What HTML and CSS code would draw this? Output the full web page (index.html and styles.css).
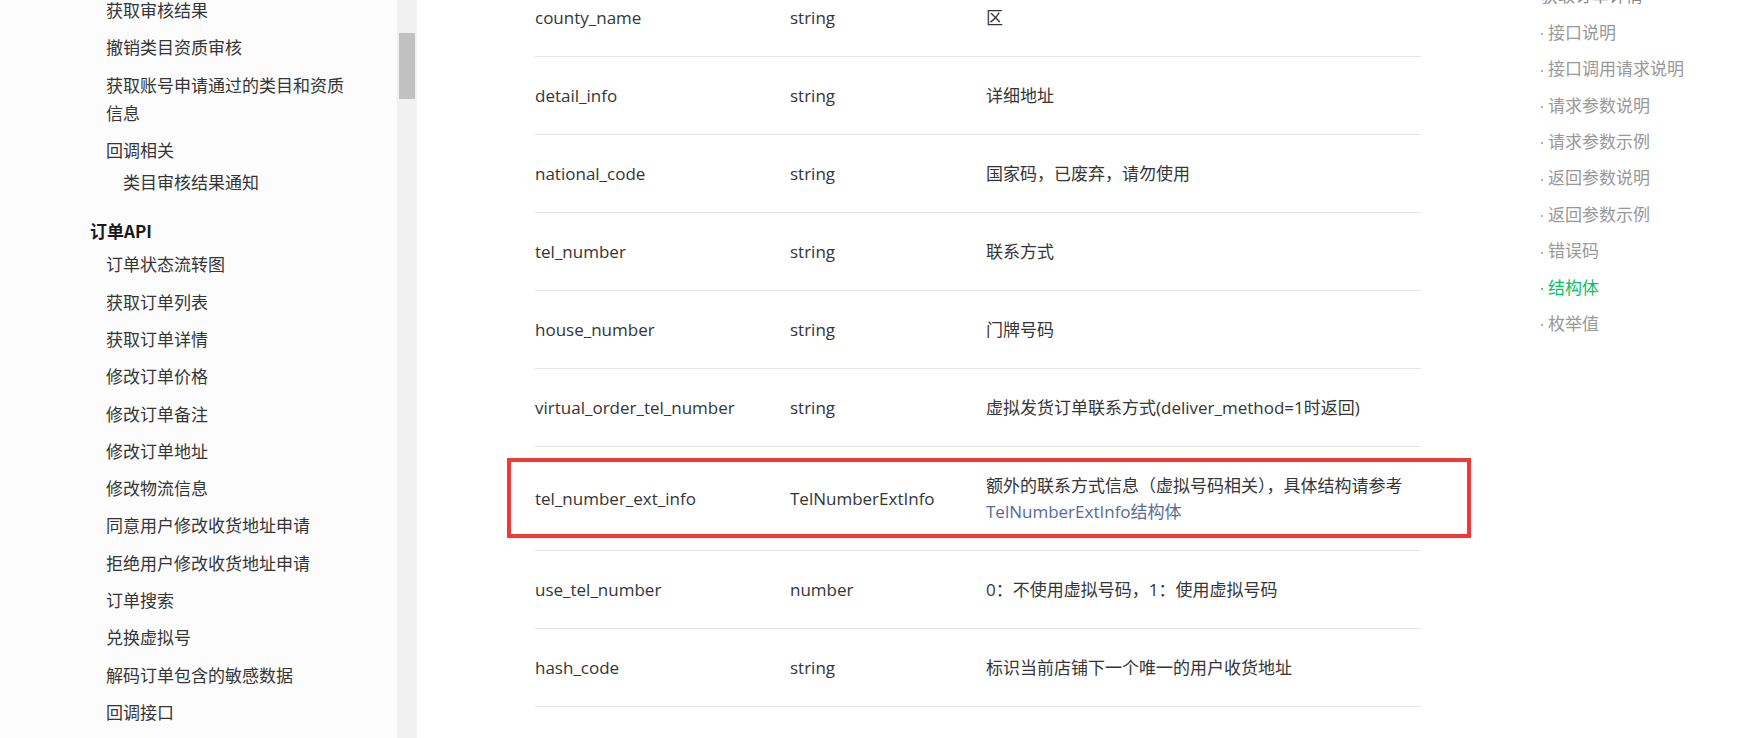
FILE: index.html
```html
<!DOCTYPE html>
<html lang="zh-CN">
<head>
<meta charset="utf-8">
<title>获取订单详情</title>
<link rel="stylesheet" href="styles.css">
</head>
<body>
<nav class="sidebar">
  <ul class="nav nav-first">
    <li class="nav-item">获取审核结果</li>
    <li class="nav-item">撤销类目资质审核</li>
    <li class="nav-item">获取账号申请通过的类目和资质信息</li>
    <li class="nav-item">回调相关</li>
    <li class="nav-sub">类目审核结果通知</li>
  </ul>
  <div class="nav-heading">订单API</div>
  <ul class="nav">
    <li class="nav-item">订单状态流转图</li>
    <li class="nav-item">获取订单列表</li>
    <li class="nav-item">获取订单详情</li>
    <li class="nav-item">修改订单价格</li>
    <li class="nav-item">修改订单备注</li>
    <li class="nav-item">修改订单地址</li>
    <li class="nav-item">修改物流信息</li>
    <li class="nav-item">同意用户修改收货地址申请</li>
    <li class="nav-item">拒绝用户修改收货地址申请</li>
    <li class="nav-item">订单搜索</li>
    <li class="nav-item">兑换虚拟号</li>
    <li class="nav-item">解码订单包含的敏感数据</li>
    <li class="nav-item">回调接口</li>
    <li class="nav-item">订单状态推送</li>
  </ul>
</nav>
<div class="scrollbar"><div class="thumb"></div></div>
<main class="main">
  <div class="table">
    <div class="row"><div class="cell">county_name</div><div class="cell">string</div><div class="cell">区</div></div>
    <div class="row"><div class="cell">detail_info</div><div class="cell">string</div><div class="cell">详细地址</div></div>
    <div class="row"><div class="cell">national_code</div><div class="cell">string</div><div class="cell">国家码，已废弃，请勿使用</div></div>
    <div class="row"><div class="cell">tel_number</div><div class="cell">string</div><div class="cell">联系方式</div></div>
    <div class="row"><div class="cell">house_number</div><div class="cell">string</div><div class="cell">门牌号码</div></div>
    <div class="row"><div class="cell">virtual_order_tel_number</div><div class="cell">string</div><div class="cell">虚拟发货订单联系方式(deliver_method=1时返回)</div></div>
    <div class="row row-marked"><div class="cell">tel_number_ext_info</div><div class="cell">TelNumberExtInfo</div><div class="cell">额外的联系方式信息（虚拟号码相关），具体结构请参考<a class="link" href="#">TelNumberExtInfo结构体</a></div></div>
    <div class="row"><div class="cell">use_tel_number</div><div class="cell">number</div><div class="cell">0：不使用虚拟号码，1：使用虚拟号码</div></div>
    <div class="row"><div class="cell">hash_code</div><div class="cell">string</div><div class="cell">标识当前店铺下一个唯一的用户收货地址</div></div>
  </div>
</main>
<aside class="toc">
  <div class="toc-title">获取订单详情</div>
  <ul class="toc-list">
    <li class="toc-item"><span class="dot"></span>接口说明</li>
    <li class="toc-item"><span class="dot"></span>接口调用请求说明</li>
    <li class="toc-item"><span class="dot"></span>请求参数说明</li>
    <li class="toc-item"><span class="dot"></span>请求参数示例</li>
    <li class="toc-item"><span class="dot"></span>返回参数说明</li>
    <li class="toc-item"><span class="dot"></span>返回参数示例</li>
    <li class="toc-item"><span class="dot"></span>错误码</li>
    <li class="toc-item active"><span class="dot"></span>结构体</li>
    <li class="toc-item"><span class="dot"></span>枚举值</li>
  </ul>
</aside>
</body>
</html>
```
FILE: styles.css
```css
* {
  box-sizing: border-box;
  margin: 0;
  padding: 0;
}

html, body {
  height: 100%;
}

body {
  display: flex;
  height: 738px;
  overflow: hidden;
  background: #ffffff;
  font-family: "Open Sans", "Noto Sans CJK SC", sans-serif;
  color: #353535;
}

ul {
  list-style: none;
}

/* ---------- left navigation ---------- */
.sidebar {
  flex: none;
  width: 397px;
  background: #fcfcfc;
  padding: 0 46px 0 90px;
  overflow: hidden;
  font-family: "Noto Sans CJK SC", sans-serif;
  font-size: 17px;
  color: #353535;
}

.nav-first {
  margin-top: -8.65px;
}

.nav-item {
  padding: 4.65px 0 4.65px 16px;
  line-height: 28px;
}

.nav-sub {
  padding: 0 0 4.65px 33px;
  line-height: 28px;
}

.nav-heading {
  margin-top: 11px;
  padding: 4.65px 0 1px 0;
  line-height: 28px;
  font-weight: 700;
  color: #191919;
}

/* ---------- fake scrollbar ---------- */
.scrollbar {
  flex: none;
  width: 20px;
  background: #f1f1f1;
  padding: 33px 2px 0 2px;
}

.thumb {
  height: 66px;
  background: #c1c1c1;
}

/* ---------- main table ---------- */
.main {
  flex: 1;
  padding-left: 118px;
  font-size: 17px;
  color: #353535;
}

.table {
  width: 886px;
  margin-top: -21px;
}

.row {
  display: grid;
  grid-template-columns: 255px 196px 435px;
  align-items: center;
  padding: 26px 0 25px 0;
  border-bottom: 1px solid #e5e5e5;
  line-height: 26px;
}

.row-marked {
  position: relative;
}

.row-marked::after {
  content: "";
  position: absolute;
  top: 11px;
  bottom: 12px;
  left: -28px;
  right: -50px;
  border: 4px solid #f03a3a;
}

.link {
  color: #576b95;
  text-decoration: none;
}

/* ---------- right toc ---------- */
.toc {
  flex: none;
  width: 199px;
  padding-left: 2px;
  font-family: "Noto Sans CJK SC", sans-serif;
  font-size: 17px;
  color: #999999;
}

.toc-title {
  margin-top: -22.6px;
  line-height: 36.4px;
  color: #8a8a8a;
}

.toc-item {
  line-height: 36.4px;
  white-space: nowrap;
}

.dot {
  display: inline-block;
  width: 2px;
  height: 2px;
  border-radius: 50%;
  background: currentColor;
  margin-right: 5px;
  vertical-align: middle;
}

.toc-item.active {
  color: #07c160;
}
```
